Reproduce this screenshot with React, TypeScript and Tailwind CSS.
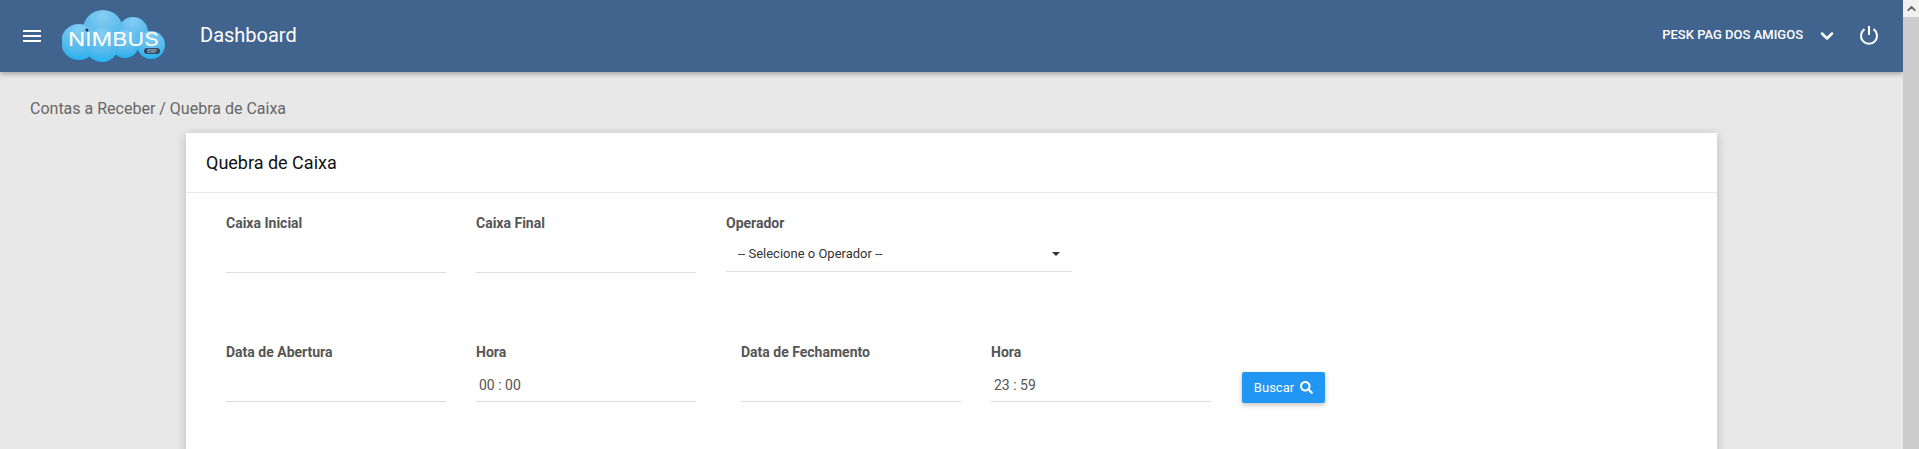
import { ChevronDown, ChevronUp } from 'lucide-react';
import { FaSearch } from 'react-icons/fa';

function Logo() {
    return (
        <svg width="106" height="54" viewBox="0 0 106 54" className="shrink-0">
            <defs>
                <radialGradient id="lobe" cx="0.5" cy="0.15" r="0.95">
                    <stop offset="0" stopColor="#86cdf2" />
                    <stop offset="0.6" stopColor="#55b9ec" />
                    <stop offset="1" stopColor="#14aeef" />
                </radialGradient>
            </defs>
            <g fill="url(#lobe)">
                <circle cx="41" cy="21" r="20" />
                <circle cx="71" cy="23" r="15" />
                <circle cx="89" cy="36" r="14" />
                <circle cx="63" cy="35" r="14" />
                <circle cx="17" cy="33" r="18" />
                <circle cx="40" cy="36" r="17" />
            </g>
            <text x="51.5" y="37" textAnchor="middle" fill="#ffffff" fontFamily="Inter, sans-serif" fontWeight="400" fontSize="18" textLength="91" lengthAdjust="spacingAndGlyphs">NIMBUS</text>
            <circle cx="25" cy="21" r="1.5" fill="#1c2f4a" />
            <rect x="82" y="39" width="16" height="6" rx="3" fill="#2d4a66" />
            <text x="90" y="44" textAnchor="middle" fill="#c9d6e2" fontFamily="Inter, sans-serif" fontSize="5">ERP</text>
        </svg>
    );
}

function MenuIcon() {
    return (
        <svg width="18" height="12" viewBox="0 0 18 12" fill="#ffffff" className="ml-[23px] shrink-0">
            <rect y="0" width="18" height="2" />
            <rect y="5" width="18" height="2" />
            <rect y="10" width="18" height="2" />
        </svg>
    );
}

function PowerIcon() {
    return (
        <svg width="20" height="20" viewBox="0 0 20 20" fill="none" stroke="#ffffff" strokeWidth="2" className="ml-[22px] mr-[24px] shrink-0">
            <path d="M10 1v9" />
            <path d="M5.5 4.2a8 8 0 1 0 9 0" />
        </svg>
    );
}

function Field({ label, value, className }: { label: string; value?: string; className: string }) {
    return (
        <div className={className}>
            <label className="block text-[14px] leading-[20px] font-bold text-[#555555]">{label}</label>
            <div className="mt-[9px] h-[31px] flex items-center pl-[3px] pb-[2px] border-b border-[#dddddd] text-[14px] text-[#555555]">
                {value}
            </div>
        </div>
    );
}

export default function App() {
    return (
        <div className="flex h-screen overflow-hidden bg-[#e8e8e8] font-['Roboto',sans-serif]">
            <div className="flex-1 min-w-0">
                <header className="h-[72px] bg-[#41648f] shadow-[0_2px_5px_rgba(0,0,0,0.3)] flex items-center text-white">
                    <MenuIcon />
                    <div className="ml-[21px]">
                        <Logo />
                    </div>
                    <h1 className="ml-[32px] text-[20px] leading-[28px] -mt-[2px]">Dashboard</h1>
                    <div className="ml-auto flex items-center -mt-[2px]">
                        <span className="text-[13px] font-medium">PESK PAG DOS AMIGOS</span>
                        <ChevronDown size={20} strokeWidth={3} className="ml-[14px] mt-[2px]" />
                        <PowerIcon />
                    </div>
                </header>
                <p className="mt-[25px] ml-[30px] text-[16px] leading-[24px] text-[#666666]">Contas a Receber / Quebra de Caixa</p>
                <div className="mt-[12px] mx-auto w-[1531px] bg-white shadow-[0_2px_10px_rgba(0,0,0,0.2)] h-[400px]">
                    <div className="h-[60px] flex items-center px-[20px] border-b border-[#e8e8e8]">
                        <h2 className="text-[18px] text-[#111111]">Quebra de Caixa</h2>
                    </div>
                    <div className="pl-[40px] pt-[20px] flex gap-[30px]">
                        <Field label="Caixa Inicial" className="w-[220px]" />
                        <Field label="Caixa Final" className="w-[220px]" />
                        <div className="w-[346px]">
                            <label className="block text-[14px] leading-[20px] font-bold text-[#555555]">Operador</label>
                            <div className="mt-[9px] h-[30px] flex items-center justify-between px-[12px] pb-[5px] border-b border-[#dddddd] text-[13px] text-[#333333]">
                                <span>-- Selecione o Operador --</span>
                                <span className="w-0 h-0 border-x-[4px] border-x-transparent border-t-[4px] border-t-[#333333]" />
                            </div>
                        </div>
                    </div>
                    <div className="pl-[40px] pt-[69px] flex items-start">
                        <Field label="Data de Abertura" className="w-[220px]" />
                        <Field label="Hora" value="00 : 00" className="w-[220px] ml-[30px]" />
                        <Field label="Data de Fechamento" className="w-[220px] ml-[45px]" />
                        <Field label="Hora" value="23 : 59" className="w-[220px] ml-[30px]" />
                        <button className="ml-[31px] mt-[30px] w-[83px] h-[31px] rounded-[2px] bg-[#2196f3] text-white text-[13px] flex items-center justify-center gap-[6px] shadow-[0_2px_5px_rgba(0,0,0,0.25)]">
                            Buscar
                            <FaSearch size={13} />
                        </button>
                    </div>
                </div>
            </div>
            <div className="w-[16px] shrink-0 bg-[#cccccc]">
                <div className="h-[17px] bg-[#f1f1f1] flex items-center justify-center">
                    <ChevronUp size={13} strokeWidth={3.5} className="text-[#666666]" />
                </div>
            </div>
        </div>
    );
}
